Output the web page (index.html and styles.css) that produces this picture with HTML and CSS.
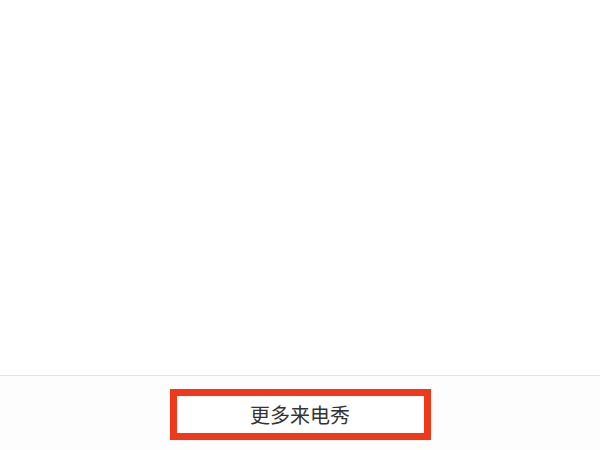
FILE: index.html
```html
<!DOCTYPE html>
<html lang="zh-CN">
<head>
<meta charset="utf-8">
<link rel="stylesheet" href="styles.css">
</head>
<body>
<div class="page">
  <div class="content"></div>
  <div class="footer">
    <div class="more-btn">更多来电秀</div>
  </div>
</div>
</body>
</html>
```
FILE: styles.css
```css
html, body {
  margin: 0;
  padding: 0;
  background: #ffffff;
}
.page {
  width: 600px;
  height: 450px;
  display: flex;
  flex-direction: column;
  overflow: hidden;
  font-family: "Noto Sans CJK SC", "Noto Sans", sans-serif;
}
.content {
  height: 375px;
  flex: none;
  background: #ffffff;
  border-bottom: 1px solid #e4e4e4;
}
.footer {
  flex: 1;
  display: flex;
  justify-content: center;
  align-items: flex-start;
  padding-top: 13px;
  background: #fdfdfd;
}
.more-btn {
  box-sizing: border-box;
  width: 261px;
  height: 51px;
  border: 7px solid #f0391b;
  background: #ffffff;
  display: flex;
  align-items: center;
  justify-content: center;
  font-size: 20px;
  color: #333333;
  line-height: 1;
}
```
